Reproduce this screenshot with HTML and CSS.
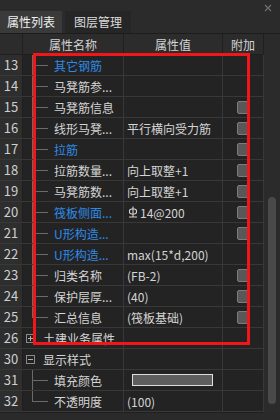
FILE: index.html
```html
<!DOCTYPE html>
<html lang="zh">
  <head>
    <meta charset="UTF-8" />
    <title>属性列表</title>
    <link rel="stylesheet" href="styles.css">
  </head>
  <body>
    <div class="panel">
      <div class="tabs">
        <div class="tab active">属性列表</div>
        <div class="tab">图层管理</div>
        <svg class="close" width="8" height="8" viewBox="0 0 8 8">
          <path d="M1 1L7 7M7 1L1 7" stroke="#6f6f6f" stroke-width="1.2" />
        </svg>
      </div>

      <div class="body">
        <div class="grid">
          <div class="row head">
            <div class="num"></div>
            <div class="cell center">属性名称</div>
            <div class="cell center">属性值</div>
            <div class="cell center">附加</div>
          </div>

          <div class="row">
            <div class="num">13</div>
            <div class="cell name"><span class="branch"></span><span class="blue">其它钢筋</span></div>
            <div class="cell val"></div>
            <div class="cell add"></div>
          </div>
          <div class="row">
            <div class="num">14</div>
            <div class="cell name"><span class="branch"></span><span>马凳筋参...</span></div>
            <div class="cell val"></div>
            <div class="cell add"></div>
          </div>
          <div class="row">
            <div class="num">15</div>
            <div class="cell name"><span class="branch"></span><span>马凳筋信息</span></div>
            <div class="cell val"></div>
            <div class="cell add"><span class="check"></span></div>
          </div>
          <div class="row">
            <div class="num">16</div>
            <div class="cell name"><span class="branch"></span><span>线形马凳...</span></div>
            <div class="cell val">平行横向受力筋</div>
            <div class="cell add"><span class="check"></span></div>
          </div>
          <div class="row">
            <div class="num">17</div>
            <div class="cell name"><span class="branch"></span><span class="blue">拉筋</span></div>
            <div class="cell val"></div>
            <div class="cell add"><span class="check"></span></div>
          </div>
          <div class="row">
            <div class="num">18</div>
            <div class="cell name"><span class="branch"></span><span>拉筋数量...</span></div>
            <div class="cell val">向上取整+1</div>
            <div class="cell add"><span class="check"></span></div>
          </div>
          <div class="row">
            <div class="num">19</div>
            <div class="cell name"><span class="branch"></span><span>马凳筋数...</span></div>
            <div class="cell val">向上取整+1</div>
            <div class="cell add"><span class="check"></span></div>
          </div>
          <div class="row">
            <div class="num">20</div>
            <div class="cell name"><span class="branch"></span><span class="blue">筏板侧面...</span></div>
            <div class="cell val">
              <svg class="grade" width="10" height="12" viewBox="0 0 10 12">
                <path d="M5 0.5V11M1 11H9" stroke="#d4d4d4" stroke-width="1.1" fill="none" />
                <rect x="1.5" y="3" width="7" height="5" rx="2.2" stroke="#d4d4d4" stroke-width="1.1" fill="none" />
              </svg>14@200
            </div>
            <div class="cell add"><span class="check"></span></div>
          </div>
          <div class="row">
            <div class="num">21</div>
            <div class="cell name"><span class="branch"></span><span class="blue">U形构造...</span></div>
            <div class="cell val"></div>
            <div class="cell add"><span class="check"></span></div>
          </div>
          <div class="row">
            <div class="num">22</div>
            <div class="cell name"><span class="branch"></span><span class="blue">U形构造...</span></div>
            <div class="cell val">max(15*d,200)</div>
            <div class="cell add"></div>
          </div>
          <div class="row">
            <div class="num">23</div>
            <div class="cell name"><span class="branch"></span><span>归类名称</span></div>
            <div class="cell val">(FB-2)</div>
            <div class="cell add"><span class="check"></span></div>
          </div>
          <div class="row">
            <div class="num">24</div>
            <div class="cell name"><span class="branch"></span><span>保护层厚...</span></div>
            <div class="cell val">(40)</div>
            <div class="cell add"><span class="check"></span></div>
          </div>
          <div class="row">
            <div class="num">25</div>
            <div class="cell name"><span class="branch last"></span><span>汇总信息</span></div>
            <div class="cell val">(筏板基础)</div>
            <div class="cell add"><span class="check"></span></div>
          </div>
          <div class="row">
            <div class="num">26</div>
            <div class="cell name group">
              <svg class="toggle" width="9" height="9" viewBox="0 0 9 9">
                <rect x="0.5" y="0.5" width="8" height="8" stroke="#8a8a8a" fill="none" />
                <path d="M2 4.5H7M4.5 2V7" stroke="#b0b0b0" />
              </svg>
              <span>土建业务属性</span>
            </div>
            <div class="cell val"></div>
            <div class="cell add"></div>
          </div>
          <div class="row">
            <div class="num">30</div>
            <div class="cell name group">
              <svg class="toggle" width="9" height="9" viewBox="0 0 9 9">
                <rect x="0.5" y="0.5" width="8" height="8" stroke="#8a8a8a" fill="none" />
                <path d="M2 4.5H7" stroke="#b0b0b0" />
              </svg>
              <span>显示样式</span>
            </div>
            <div class="cell val"></div>
            <div class="cell add"></div>
          </div>
          <div class="row">
            <div class="num">31</div>
            <div class="cell name"><span class="branch"></span><span>填充颜色</span></div>
            <div class="cell val"><span class="swatch"></span></div>
            <div class="cell add"></div>
          </div>
          <div class="row">
            <div class="num">32</div>
            <div class="cell name"><span class="branch last"></span><span>不透明度</span></div>
            <div class="cell val">(100)</div>
            <div class="cell add"></div>
          </div>
        </div>

        <div class="scroll">
          <div class="thumb"></div>
        </div>
      </div>

      <div class="mark"></div>
    </div>
  </body>
</html>
```

FILE: styles.css
```css
body {
  margin: 0;
  background: #2a2a2a;
  font-family: "Noto Sans CJK SC", "Noto Sans", sans-serif;
  font-size: 12px;
  color: #d4d4d4;
}
.panel {
  position: relative;
  width: 280px;
  height: 420px;
  background: #2a2a2a;
}
.tabs {
  display: flex;
  align-items: flex-end;
  height: 33px;
  border-bottom: 1px solid #1c1c1c;
  background: #2b2b2b;
}
.tab {
  height: 22px;
  line-height: 21px;
  width: 66px;
  text-align: center;
  background: #262626;
  color: #dcdcdc;
  margin-left: 3px;
}
.tab.active {
  width: 62px;
  margin-left: 0;
  background: #3a3a3a;
  color: #f0f0f0;
}
.close {
  align-self: flex-start;
  margin: 4px 8px 0 auto;
}
.body {
  display: flex;
}
.grid {
  width: 264px;
  border-bottom: 1px solid #1f1f1f;
}
.row {
  display: grid;
  grid-template-columns: 23px 101px 99px 41px;
  height: 21px;
  box-sizing: border-box;
  border-bottom: 1px solid #383838;
  background: #232323;
}
.row.head {
  background: #2c2c2c;
  border-bottom-color: #1f1f1f;
}
.num {
  box-sizing: border-box;
  border-right: 1px solid #1f1f1f;
  background: #2e2e2e;
  text-align: center;
  line-height: 20px;
  font-size: 13px;
  color: #cfcfcf;
}
.head .num {
  background: #2c2c2c;
}
.cell {
  box-sizing: border-box;
  border-right: 1px solid #383838;
  display: flex;
  align-items: center;
  white-space: nowrap;
  overflow: hidden;
}
.head .cell {
  border-right-color: #1f1f1f;
}
.center {
  justify-content: center;
}
.name {
  padding-left: 9px;
  align-items: stretch;
}
.name span:last-child {
  align-self: center;
}
.branch {
  width: 16px;
  margin-right: 6px;
  background:
    linear-gradient(#6a6a6a, #6a6a6a) left top / 1px 100% no-repeat,
    linear-gradient(#6a6a6a, #6a6a6a) left 10px / 16px 1px no-repeat;
}
.branch.last {
  background:
    linear-gradient(#6a6a6a, #6a6a6a) left top / 1px 11px no-repeat,
    linear-gradient(#6a6a6a, #6a6a6a) left 10px / 16px 1px no-repeat;
}
.group {
  padding-left: 3px;
  align-items: center;
}
.toggle {
  margin-right: 8px;
}
.blue {
  color: #2f8ae6;
}
.val {
  padding-left: 3px;
}
.grade {
  margin: 0 2px 0 1px;
}
.add {
  justify-content: center;
}
.check {
  width: 11px;
  height: 11px;
  border: 1px solid #7c7c7c;
  border-radius: 2px;
  background: #585858;
}
.swatch {
  margin-left: 5px;
  width: 79px;
  height: 10px;
  border: 1px solid #dedede;
  background: #5e5e5e;
}
.scroll {
  width: 16px;
  height: 378px;
  background: #2b2b2b;
}
.thumb {
  margin: 163px 0 0 4px;
  width: 8px;
  height: 207px;
  border-radius: 4px;
  background: #4a4a4a;
}
.mark {
  position: absolute;
  left: 33px;
  top: 53px;
  width: 217px;
  height: 292px;
  box-sizing: border-box;
  border: 3px solid #f2161b;
}
```
